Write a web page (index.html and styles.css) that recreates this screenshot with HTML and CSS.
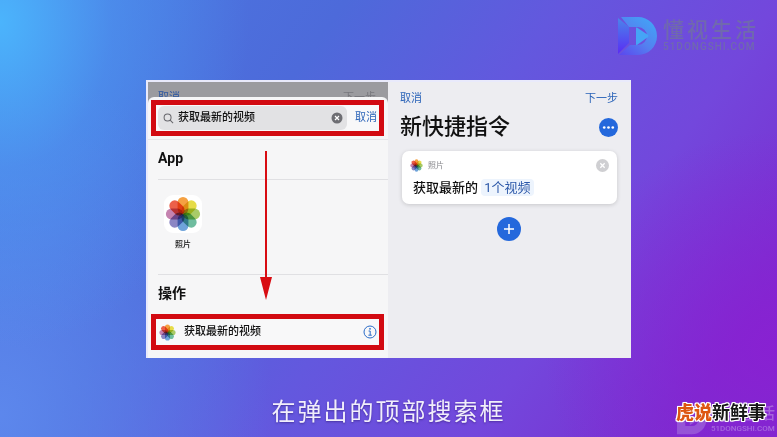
FILE: index.html
```html
<!DOCTYPE html>
<html lang="zh-CN">
<head>
<meta charset="utf-8">
<meta name="viewport" content="width=device-width, initial-scale=1">
<title>新快捷指令</title>
<link rel="stylesheet" href="styles.css">
</head>
<body>
<svg class="sprite" aria-hidden="true">
  <defs>
    <linearGradient id="mark-a" x1="0" y1="1" x2="0.8" y2="0">
      <stop offset="0" stop-color="#5b46ee"/>
      <stop offset="0.5" stop-color="#5480f0"/>
      <stop offset="1" stop-color="#42a4f6"/>
    </linearGradient>
    <linearGradient id="mark-b" x1="0" y1="0" x2="0" y2="1">
      <stop offset="0" stop-color="#4a86ea"/>
      <stop offset="1" stop-color="#5a2cf4"/>
    </linearGradient>
    <symbol id="photos" viewBox="0 0 40 40">
      <g class="petals">
        <rect x="14" y="1" width="12" height="19" rx="6" fill="#f5a142"/>
        <rect x="14" y="1" width="12" height="19" rx="6" fill="#e6dc48" transform="rotate(45 20 20)"/>
        <rect x="14" y="1" width="12" height="19" rx="6" fill="#a9cb68" transform="rotate(90 20 20)"/>
        <rect x="14" y="1" width="12" height="19" rx="6" fill="#6fbd9f" transform="rotate(135 20 20)"/>
        <rect x="14" y="1" width="12" height="19" rx="6" fill="#6fa3da" transform="rotate(180 20 20)"/>
        <rect x="14" y="1" width="12" height="19" rx="6" fill="#8b86c4" transform="rotate(225 20 20)"/>
        <rect x="14" y="1" width="12" height="19" rx="6" fill="#c583b0" transform="rotate(270 20 20)"/>
        <rect x="14" y="1" width="12" height="19" rx="6" fill="#ec6049" transform="rotate(315 20 20)"/>
      </g>
    </symbol>
    <symbol id="mark" viewBox="0 0 40 40">
      <path d="M0 2 L11 11 V27 L0 38 Z" fill="url(#mark-b)"/>
      <path d="M3 1 H20 A19 19 0 0 1 20 39 H1 L12 29 H20 A9 9 0 0 0 20 11 H11 Z" fill="url(#mark-a)"/>
      <path d="M18 12 Q18 11 19 11.6 L30 19 Q31 20 30 21 L19 29 Q18 29.6 18 28 Z" fill="#45a4f6"/>
    </symbol>
    <symbol id="mark-flat" viewBox="0 0 40 40">
      <path fill-rule="evenodd" d="M0 1 H20 A19 19 0 0 1 20 39 H0 Z M11 11 V28 H20 A8.5 8.5 0 0 0 20 11 Z"/>
      <path d="M17 13 L28 20 L17 27 Z"/>
    </symbol>
  </defs>
</svg>

<div class="stage">
  <header class="top">
    <div class="brand">
      <svg class="brand-mark"><use href="#mark"/></svg>
      <div class="brand-text">
        <span class="brand-name">懂视生活</span>
        <span class="brand-url">51DONGSHI.COM</span>
      </div>
    </div>
  </header>

  <main class="board">
    <section class="pane search-pane">
      <div class="dimmed"><span>取消</span><span class="dimmed-next">下一步</span></div>
      <div class="sheet">
        <form class="marked search">
          <label class="field">
            <svg class="glass" viewBox="0 0 12 12"><circle cx="5" cy="5" r="3.8"/><path d="M7.8 7.8 L11 11"/></svg>
            <input type="text" value="获取最新的视频" aria-label="搜索">
            <button class="clear" type="button" aria-label="清除">
              <svg viewBox="0 0 12 12"><circle cx="6" cy="6" r="5.5"/><path d="M4 4 L8 8 M8 4 L4 8"/></svg>
            </button>
          </label>
          <button class="link" type="button">取消</button>
        </form>
        <h2 class="group app-group">App</h2>
        <div class="apps">
          <button class="app" type="button">
            <span class="tile"><svg><use href="#photos"/></svg></span>
            照片
          </button>
        </div>
        <h2 class="group">操作</h2>
        <div class="marked action">
          <svg class="action-icon"><use href="#photos"/></svg>
          <span class="action-name">获取最新的视频</span>
          <button class="info" type="button" aria-label="信息">
            <svg viewBox="0 0 14 14"><circle cx="7" cy="7" r="6"/><path d="M5.6 6 H7.2 V10.2 M5.4 10.2 H8.8"/><circle class="dot" cx="7" cy="3.8" r="0.9"/></svg>
          </button>
        </div>
      </div>
      <svg class="arrow" viewBox="0 0 12 149"><path d="M5 0 H7 V126 H12 L6 149 L0 126 H5 Z"/></svg>
    </section>

    <section class="pane editor">
      <nav class="bar">
        <button class="link" type="button">取消</button>
        <button class="link" type="button">下一步</button>
      </nav>
      <div class="heading">
        <h1>新快捷指令</h1>
        <button class="round more" type="button" aria-label="更多">
          <svg viewBox="0 0 20 20"><circle cx="5.5" cy="10" r="1.4"/><circle cx="10" cy="10" r="1.4"/><circle cx="14.5" cy="10" r="1.4"/></svg>
        </button>
      </div>
      <article class="card">
        <div class="card-head">
          <svg class="card-icon"><use href="#photos"/></svg>
          <span class="card-app">照片</span>
          <button class="clear pale" type="button" aria-label="移除">
            <svg viewBox="0 0 12 12"><circle cx="6" cy="6" r="6"/><path d="M4 4 L8 8 M8 4 L4 8"/></svg>
          </button>
        </div>
        <p class="card-text">获取最新的 <button class="token" type="button">1个视频</button></p>
      </article>
      <button class="round add" type="button" aria-label="添加">
        <svg viewBox="0 0 24 24"><path d="M12 7 V17 M7 12 H17"/></svg>
      </button>
    </section>
  </main>

  <p class="caption">在弹出的顶部搜索框</p>

  <div class="corner">
    <div class="brand ghost">
      <svg class="brand-mark"><use href="#mark-flat"/></svg>
      <div class="brand-text">
        <span class="brand-name">懂视生活</span>
        <span class="brand-url">51DONGSHI.COM</span>
      </div>
    </div>
    <p class="channel"><b>虎说</b>新鲜事</p>
  </div>
</div>
</body>
</html>
```
FILE: styles.css
```css
* { box-sizing: border-box; }

body {
  margin: 0;
  font-family: Roboto, "Noto Sans CJK SC", sans-serif;
  font-size: 11px;
  line-height: 16px;
  color: #111;
}

h1, h2, p { margin: 0; }

button, input {
  margin: 0;
  padding: 0;
  border: 0;
  background: none;
  font: inherit;
  color: inherit;
}

svg { display: block; }
.sprite { position: absolute; width: 0; height: 0; }
.petals rect { mix-blend-mode: multiply; }
.petals { isolation: isolate; }

.stage {
  position: relative;
  display: flex;
  flex-direction: column;
  min-height: 100vh;
  overflow: hidden;
  background:
    radial-gradient(ellipse 32% 75% at 0% 5%, #4bb4fc 0%, rgba(76, 160, 246, 0.5) 45%, rgba(80, 120, 230, 0) 100%),
    radial-gradient(ellipse 30% 50% at 100% 80%, rgba(140, 30, 210, 0.8) 0%, rgba(130, 40, 210, 0) 100%),
    radial-gradient(ellipse 35% 80% at 0% 95%, rgba(94, 138, 238, 0.9) 0%, rgba(94, 130, 236, 0) 100%),
    linear-gradient(125deg, #4a7ce2 0%, #4d6ada 32%, #6358de 52%, #7347dc 72%, #7a2ed0 90%, #7c2cd0 100%);
}

.top {
  display: flex;
  justify-content: flex-end;
  height: 80px;
  padding: 16px 18px 0 0;
}

.brand { display: flex; gap: 5px; align-items: flex-start; }
.brand-mark { width: 40px; height: 40px; }
.brand-text {
  display: flex;
  flex-direction: column;
  color: #7069ae;
}
.brand-name {
  padding-top: 2px;
  font-size: 21px;
  line-height: 24px;
  letter-spacing: 3px;
  font-weight: 500;
}
.brand-url {
  font-size: 10px;
  line-height: 10px;
  letter-spacing: 1px;
  font-weight: 500;
}

.board {
  display: grid;
  grid-template-columns: 241fr 244fr;
  width: 62.4%;
  margin: 0 auto;
  padding: 2px 0 0 2px;
  background: #e9eafb;
}

.search-pane {
  position: relative;
  background: #9b9b9f;
}
.dimmed {
  display: flex;
  justify-content: space-between;
  height: 15px;
  padding: 8px 12px 0 10px;
  overflow: hidden;
  color: #2a55a0;
}
.dimmed-next { color: #77777c; }

.sheet {
  position: relative;
  padding: 3px 4px 8px 3px;
  border-radius: 6px 6px 0 0;
  background: #f6f6f7;
}

.marked {
  display: flex;
  align-items: center;
  height: 36px;
  border: 5px solid #d20a11;
  background: #f8f8f9;
}
.search { gap: 8px; padding: 0 2px; }
.field {
  display: flex;
  flex: 1;
  align-items: center;
  gap: 4px;
  min-width: 0;
  height: 24px;
  padding: 0 4px 0 5px;
  border-radius: 6px;
  background: #e2e2e4;
}
.field input { flex: 1; min-width: 0; font-weight: 500; outline: none; }
.glass { width: 11px; height: 11px; fill: none; stroke: #66666b; stroke-width: 1.1; }
.clear svg { width: 12px; height: 12px; fill: #6e6e73; }
.clear path { stroke: #fff; stroke-width: 1.2; }
.pale svg { width: 13px; height: 13px; fill: #cfcfd2; }
.link { color: #2a63b8; }

.group {
  padding: 10px 7px 13px;
  font-size: 14px;
  line-height: 16px;
  font-weight: 700;
}
.app-group {
  margin: 3px -4px 0 -3px;
  padding: 10px 10px 13px;
  border-top: 1px solid #e6e6e9;
}
.apps {
  height: 96px;
  margin: 0 -4px 0 7px;
  padding: 15px 0 0 6px;
  border: 1px solid #e0e0e3;
  border-width: 1px 0;
}
.app {
  display: flex;
  flex-direction: column;
  align-items: center;
  gap: 4px;
  font-size: 8px;
  font-weight: 500;
}
.tile { padding: 1px; border-radius: 9px; background: #fff; }
.tile svg { width: 36px; height: 36px; }

.action { gap: 8px; padding: 0 2px 0 3px; }
.action-icon { width: 17px; height: 17px; }
.action-name { flex: 1; font-weight: 500; }
.info svg { width: 14px; height: 14px; fill: none; stroke: #2a6cc8; }
.info .dot { fill: #2a6cc8; stroke: none; }

.arrow {
  position: absolute;
  top: 69px;
  left: 112px;
  width: 12px;
  height: 149px;
  fill: #d80c12;
}

.editor {
  display: flex;
  flex-direction: column;
  padding: 9px 13px 0 12px;
  background: #ededf1;
}
.bar { display: flex; justify-content: space-between; }
.heading {
  display: flex;
  align-items: center;
  justify-content: space-between;
  margin-top: 4px;
}
h1 { font-size: 22px; line-height: 32px; font-weight: 500; }
.round { border-radius: 50%; background: #2468dc; }
.round svg { width: 100%; height: 100%; fill: #fff; }
.more { width: 19px; height: 19px; }
.add { align-self: center; width: 24px; height: 24px; margin-top: 13px; }
.add path { stroke: #fff; stroke-width: 1.5; }

.card {
  margin: 8px 1px 0 2px;
  padding: 7px 8px 8px;
  border-radius: 7px;
  background: #fff;
  box-shadow: 0 1px 4px rgba(0, 0, 0, 0.16);
}
.card-head { display: flex; align-items: center; gap: 5px; height: 15px; }
.card-icon { width: 13px; height: 13px; }
.card-app { flex: 1; font-size: 8px; color: #85858a; }
.card-text {
  margin-top: 6px;
  padding-left: 3px;
  font-size: 13px;
  line-height: 17px;
  font-weight: 500;
}
.token {
  padding: 0 3px;
  border-radius: 4px;
  background: #edf4fd;
  color: #2b57a8;
  font-weight: 400;
}

.caption {
  margin-top: 36px;
  text-align: center;
  font-size: 24px;
  line-height: 36px;
  letter-spacing: 2px;
  color: #f1eefb;
  text-shadow: 0 1px 2px rgba(40, 20, 100, 0.5);
}

.corner {
  position: absolute;
  right: 0;
  bottom: 0;
  display: grid;
  justify-items: end;
}
.corner > * { grid-area: 1 / 1; }
.ghost { padding-right: 2px; gap: 4px; opacity: 0.45; }
.ghost .brand-mark { width: 30px; height: 34px; fill: #b08ae0; }
.ghost .brand-text { color: #d0b4ec; }
.ghost .brand-name { padding: 0; font-size: 16px; line-height: 22px; letter-spacing: 0; }
.ghost .brand-url { font-size: 8px; line-height: 8px; letter-spacing: 0; }
.channel {
  position: relative;
  padding-right: 11px;
  font-size: 18px;
  line-height: 20px;
  font-weight: 700;
  color: #161616;
  text-shadow: 1px 0 #fff, -1px 0 #fff, 0 1px #fff, 0 -1px #fff, 1px 1px #fff, -1px -1px #fff, 1px -1px #fff, -1px 1px #fff, 0 0 2px #fff;
}
.channel b { color: #dd5712; }
```
